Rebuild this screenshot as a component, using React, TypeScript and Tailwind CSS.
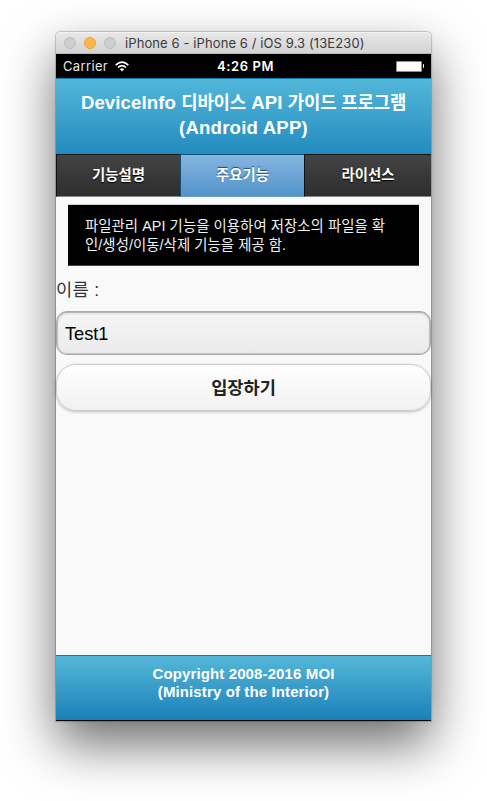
import type { ReactNode } from "react";

const sans = "font-['Liberation_Sans','Noto_Sans_CJK_KR',sans-serif]";

function TitleBar() {
  return (
    <div className="flex h-[22px] items-center rounded-t-[5px] border-b border-[#b9bbb9] bg-linear-to-b from-[#e8e8e8] to-[#d3d3d3] pl-2 shadow-[inset_0_1px_0_#f4f4f4]">
      <span className="size-3 rounded-full border border-[#bcbcbc] bg-[#cecece]" />
      <span className="ml-2 size-3 rounded-full border border-[#e8a33c] bg-[#fdb744]" />
      <span className="ml-2 size-3 rounded-full border border-[#bcbcbc] bg-[#cecece]" />
      <span className="ml-[9px] font-[Inter,sans-serif] text-[13px] leading-[22px] tracking-[0.1px] whitespace-nowrap text-[#3a3a3c]">
        iPhone 6 - iPhone 6 / iOS 9.3 (13E230)
      </span>
    </div>
  );
}

function StatusBar() {
  return (
    <div className="grid h-6 grid-cols-3 items-center bg-black px-[7px] font-[Inter,sans-serif] text-[13px] text-white">
      <div className="flex items-center pt-0.5">
        <span className="tracking-[0.35px] text-[#e6e6e6]">Carrier</span>
        <svg className="mb-0.5 ml-[7px]" width="14" height="11" viewBox="0 0 14 11" fill="none">
          <path d="M0.7 4.1Q7 -1.9 13.3 4.1" stroke="#fff" strokeWidth="1.7" />
          <path d="M3 6.5Q7 2.7 11 6.5" stroke="#fff" strokeWidth="1.6" />
          <path d="M4.9 8.3Q7 6.4 9.1 8.3L7 10.5Z" fill="#fff" />
        </svg>
      </div>
      <span className="pt-0.5 pl-1 text-center font-semibold tracking-[0.6px] whitespace-nowrap">4:26 PM</span>
      <div className="flex items-center justify-end">
        <span className="h-[11px] w-[26px] rounded-[1px] border border-[#8b8b8b] bg-white" />
        <span className="ml-px h-[4px] w-[1.5px] rounded-r-full bg-white" />
      </div>
    </div>
  );
}

function Tab({ children, active = false }: { children: ReactNode; active?: boolean }) {
  return (
    <button
      className={
        "h-[43px] border-t border-b border-l text-[14.4px] font-bold text-white " +
        (active
          ? "border-t-[#145072] border-b-[#6c9dc4] border-l-[#145072] bg-linear-to-b from-[#85b5e0] to-[#5393c9] [text-shadow:0_-1px_1px_#145072]"
          : "border-t-[#111] border-b-[#888] border-l-[#111] bg-linear-to-b from-[#444] to-[#2d2d2d] [text-shadow:0_1px_1px_#000]")
      }
    >
      {children}
    </button>
  );
}

export default function App() {
  return (
    <div className={"flex h-[801px] w-[487px] items-start justify-center overflow-hidden bg-white pt-8 " + sans}>
      <main className="flex h-[689px] w-[375px] flex-col rounded-t-[5px] bg-[#f9f9f9] shadow-[0_0_1px_0.5px_rgba(0,0,0,0.2),0_23px_52px_rgba(0,0,0,0.58)]">
        <TitleBar />
        <StatusBar />
        <header className="flex h-[76px] flex-col items-center gap-px border-t border-[#1078ac] bg-linear-to-b from-[#53b7d9] to-[#228bbf] pt-3 text-[18.6px] leading-[24px] font-bold tracking-[0.1px] whitespace-nowrap text-white">
          <span>
            DeviceInfo <span className="text-[17.8px] tracking-[-0.15px]">디바이스</span> API{" "}
            <span className="text-[17.8px] tracking-[-0.15px]">가이드 프로그램</span>
          </span>
          <span className="tracking-[0.2px]">(Android APP)</span>
        </header>
        <nav className="grid grid-cols-[124px_124px_127px]">
          <Tab>기능설명</Tab>
          <Tab active>주요기능</Tab>
          <Tab>라이선스</Tab>
        </nav>
        <p className="mx-3 mt-[7px] h-[62px] border-t border-b border-t-[#ccc] border-b-[#444] bg-black pt-3 pl-[17px] text-[14.4px] leading-[19px] tracking-[0.05px] whitespace-nowrap text-[#f0f0f0]">
          파일관리 API 기능을 이용하여 저장소의 파일을 확
          <br />
          인/생성/이동/삭제 기능을 제공 함.
        </p>
        <label className="mt-3 h-6 text-[17.6px] leading-6 tracking-[0.3px] text-[#333]">이름 :</label>
        <input
          className="mt-[9px] h-11 w-full shrink-0 rounded-[11px] border border-[#aaa] bg-linear-to-b from-[#f5f5f5] to-[#ebebeb] px-2 pt-0.5 text-[18.2px] text-black shadow-[inset_0_1px_3px_rgba(0,0,0,0.2),inset_0_0_0_0.5px_#aaa] outline-none"
          defaultValue="Test1"
        />
        <button className="mt-[9px] h-[47px] w-full shrink-0 rounded-[20px] border border-[#ccc] bg-linear-to-b from-white to-[#f1f1f1] pt-0.5 text-[17.6px] font-bold text-[#222] shadow-[0_1px_3px_rgba(0,0,0,0.25)]">
          입장하기
        </button>
        <footer className="mt-auto flex h-[66px] flex-col items-center border-t border-b border-t-[#1078ac] border-b-black bg-linear-to-b from-[#54b7d9] to-[#1981b8] pt-[9px] text-[15px] leading-[18px] font-bold tracking-[0.12px] whitespace-nowrap text-white">
          <span>Copyright 2008-2016 MOI</span>
          <span>(Ministry of the Interior)</span>
        </footer>
      </main>
    </div>
  );
}
